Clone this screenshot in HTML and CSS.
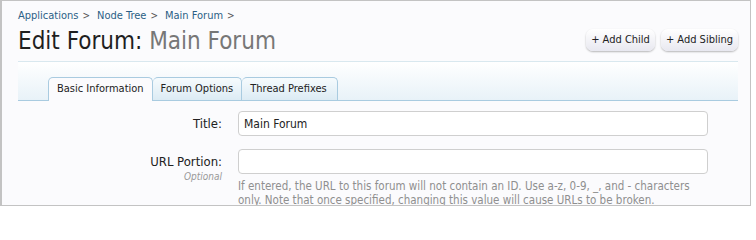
FILE: index.html
```html
<!DOCTYPE html>
<html>
<head>
<meta charset="utf-8">
<link rel="stylesheet" href="styles.css">
</head>
<body>
<div class="frame">
  <div class="header">
    <div class="titles">
      <nav class="crumbs">
        <a href="#">Applications</a><span class="gt">&gt;</span>
        <a href="#">Node Tree</a><span class="gt">&gt;</span>
        <a href="#">Main Forum</a><span class="gt">&gt;</span>
      </nav>
      <h1 class="title">Edit Forum: <em>Main Forum</em></h1>
    </div>
    <div class="actions">
      <a class="btn" href="#">+ Add Child</a>
      <a class="btn" href="#">+ Add Sibling</a>
    </div>
  </div>
  <div class="tabbar">
    <ul class="tabs">
      <li class="tab active">Basic Information</li>
      <li class="tab">Forum Options</li>
      <li class="tab">Thread Prefixes</li>
    </ul>
  </div>
  <form class="form">
    <div class="row">
      <label class="label">Title:</label>
      <div class="field"><input class="input" type="text" value="Main Forum"></div>
    </div>
    <div class="row">
      <div class="label">URL Portion:<span class="hint">Optional</span></div>
      <div class="field">
        <input class="input" type="text" value="">
        <p class="explain">If entered, the URL to this forum will not contain an ID. Use a-z, 0-9, _, and - characters only. Note that once specified, changing this value will cause URLs to be broken.</p>
      </div>
    </div>
  </form>
</div>
</body>
</html>
```
FILE: styles.css
```css
html, body {
  margin: 0;
  padding: 0;
  background: #ffffff;
}
body {
  font-family: "DejaVu Sans", sans-serif;
  font-stretch: condensed;
  color: #222;
}
.frame {
  width: 720px;
  height: 204px;
  border-left: 2px solid #c3c3c3;
  border-top: 1px solid #c3c3c3;
  border-right: 1px solid #c3c3c3;
  border-bottom: 1px solid #c3c3c3;
  background: #fbfbfd;
  padding: 0 12px 0 16px;
  overflow: hidden;
}
.header {
  display: flex;
  justify-content: space-between;
  border-bottom: 1px solid #d9e8ef;
  height: 60px;
}
.crumbs {
  font-size: 11px;
  line-height: 14px;
  padding-top: 8px;
  display: flex;
}
.crumbs a {
  color: #2b5f86;
  text-decoration: none;
}
.crumbs .gt {
  color: #555;
  font-size: 10px;
  margin: 0 7px 0 4px;
}
.title {
  margin: 4px 0 0;
  font-size: 24px;
  line-height: 28px;
  font-weight: normal;
  color: #1f1f1f;
}
.title em {
  font-style: normal;
  color: #777;
}
.actions {
  display: flex;
  gap: 6px;
  padding-top: 28px;
  align-items: flex-start;
}
.btn {
  display: block;
  height: 22px;
  line-height: 22px;
  padding: 0 5px;
  font-size: 11px;
  color: #222;
  text-decoration: none;
  border-radius: 7px;
  background: linear-gradient(#ffffff, #e8e8f0);
  box-shadow: 0 1px 2px rgba(0,0,0,0.28);
}
.tabbar {
  height: 38px;
  background: linear-gradient(#ffffff, #e8f2f8);
  border-bottom: 1px solid #a9cbe0;
  display: flex;
  align-items: flex-end;
  padding-left: 30px;
}
.tabs {
  list-style: none;
  margin: 0 0 -1px;
  padding: 0;
  display: flex;
}
.tab {
  height: 22px;
  line-height: 22px;
  padding: 0 8px;
  font-size: 11px;
  color: #222;
  border: 1px solid #a9cbe0;
  border-bottom: none;
  border-left: none;
  border-radius: 5px 5px 0 0;
  background: linear-gradient(#f6fbfd, #dcebf4);
}
.tab.active {
  border-left: 1px solid #a9cbe0;
  background: #fbfbfd;
  height: 23px;
}
.tab:last-child {
  padding-right: 10px;
}
.form {
  margin: 0;
  padding-top: 10px;
}
.row {
  display: flex;
  gap: 16px;
  margin-bottom: 13px;
}
.label {
  width: 204px;
  flex: none;
  text-align: right;
  font-size: 13px;
  line-height: 16px;
  padding-top: 5px;
  color: #222;
}
.hint {
  display: block;
  font-size: 10px;
  font-style: italic;
  color: #999;
  line-height: 12px;
  margin-top: 1px;
}
.field {
  width: 470px;
}
.input {
  display: block;
  box-sizing: border-box;
  width: 470px;
  height: 25px;
  margin: 0;
  padding: 2px 5px;
  border: 1px solid #cfcfcf;
  border-radius: 4px;
  background: #fff;
  font-family: inherit;
  font-stretch: condensed;
  font-size: 12px;
  color: #222;
  outline: none;
}
.explain {
  margin: 5px 0 0;
  font-size: 11.5px;
  line-height: 14px;
  color: #8f8f8f;
}
```
